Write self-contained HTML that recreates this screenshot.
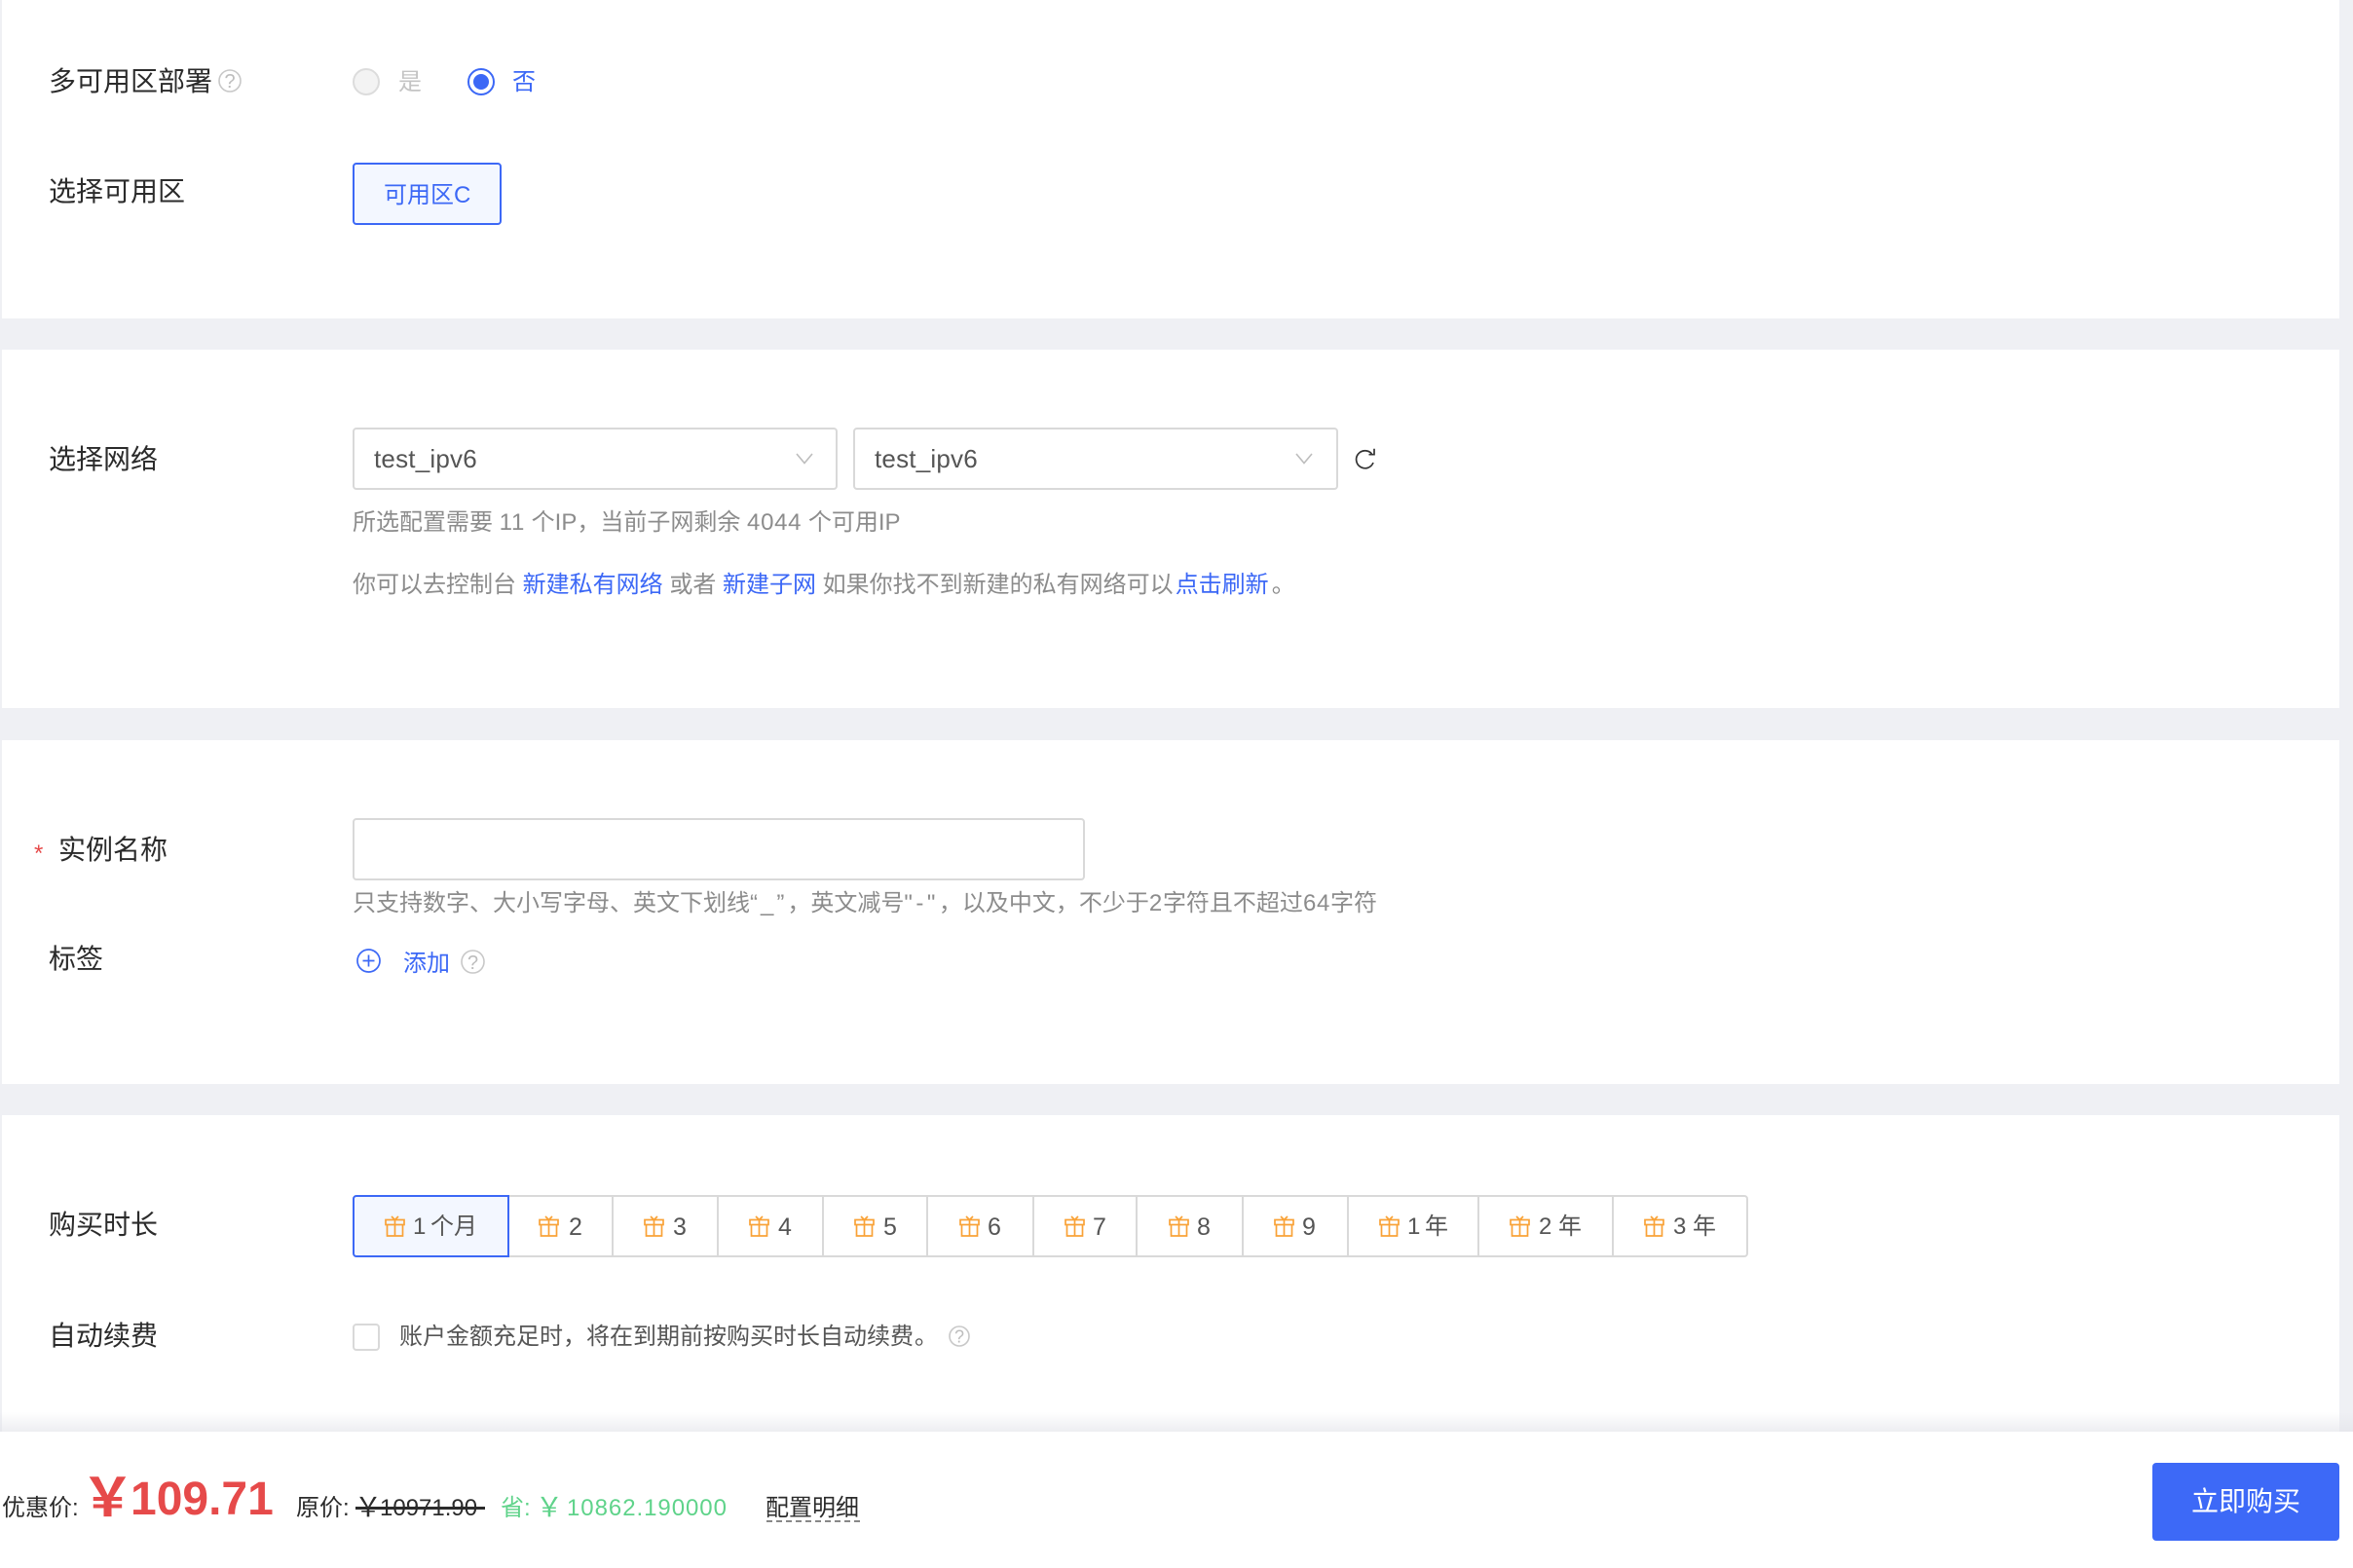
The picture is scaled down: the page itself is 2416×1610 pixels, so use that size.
<!DOCTYPE html>
<html lang="zh-CN"><head><meta charset="utf-8"><title>购买</title>
<style>
html,body{margin:0;padding:0}
body{position:relative;width:2416px;height:1610px;overflow:hidden;background:#eff0f4;font-family:"Liberation Sans","Noto Sans CJK SC",sans-serif;color:#333}
.p{position:absolute;left:2px;width:2400px;background:#fff}
.t{position:absolute;white-space:nowrap;line-height:40px;height:40px;font-size:24px}
.l{font-size:28px;color:#2b2b2b}
.g{color:#8c8c8c}
.b,.b a{color:#3c68f6}
a{color:#3c68f6;text-decoration:none}
.box{position:absolute;box-sizing:border-box;border:2px solid #d9d9d9;border-radius:4px;background:#fff}
.d{position:absolute;top:1227px;height:64px;width:2px;background:#d9d9d9}
.n{color:#555;word-spacing:-3px}
.s{font-size:25px}
.x{letter-spacing:.7px}
svg{position:absolute;overflow:visible}
svg text{font-family:"Liberation Sans",sans-serif}
</style></head><body>
<div class="p" style="top:0;height:327px"></div>
<div class="p" style="top:359px;height:368px"></div>
<div class="p" style="top:760px;height:353px"></div>
<div class="p" style="top:1145px;height:325px"></div>
<div style="position:absolute;left:0;top:1450px;width:2416px;height:20px;background:linear-gradient(rgba(225,226,232,0),rgba(225,226,232,.6))"></div>
<div style="position:absolute;left:0;top:1470px;width:2416px;height:140px;background:#fff"></div>

<!-- section 1 -->
<div class="t l" style="left:50px;top:64px">多可用区部署</div>
<svg style="left:224px;top:71px" width="24" height="24" viewBox="0 0 24 24"><circle cx="12" cy="12" r="11" fill="none" stroke="#c8c8c8" stroke-width="1.6"/><text x="12" y="19" font-size="20" text-anchor="middle" fill="#bdbdbd">?</text></svg>
<div style="position:absolute;box-sizing:border-box;left:362px;top:70px;width:28px;height:28px;border:2px solid #dcdcdc;border-radius:50%;background:#f3f3f3"></div>
<div class="t" style="left:409px;top:65px;color:#c4c4c4">是</div>
<div style="position:absolute;box-sizing:border-box;left:480px;top:70px;width:28px;height:28px;border:2px solid #3c68f6;border-radius:50%;background:#fff"></div>
<div style="position:absolute;left:486px;top:76px;width:16px;height:16px;border-radius:50%;background:#3c68f6"></div>
<div class="t b" style="left:526px;top:65px">否</div>
<div class="t l" style="left:50px;top:177px">选择可用区</div>
<div style="position:absolute;box-sizing:border-box;left:362px;top:167px;width:153px;height:64px;border:2px solid #3c68f6;border-radius:4px;background:#f3f7ff"></div>
<div class="t b" style="left:394px;top:181px">可用区C</div>

<!-- section 2 -->
<div class="t l" style="left:50px;top:452px">选择网络</div>
<div class="box" style="left:362px;top:439px;width:498px;height:64px"></div>
<div class="t" style="left:384px;top:451px;font-size:26px;color:#555;letter-spacing:.2px">test_ipv6</div>
<svg style="left:817px;top:465px" width="18" height="12" viewBox="0 0 18 12"><polyline points="1,1 9,10.5 17,1" fill="none" stroke="#bdbdbd" stroke-width="1.6"/></svg>
<div class="box" style="left:876px;top:439px;width:498px;height:64px"></div>
<div class="t" style="left:898px;top:451px;font-size:26px;color:#555;letter-spacing:.2px">test_ipv6</div>
<svg style="left:1330px;top:465px" width="18" height="12" viewBox="0 0 18 12"><polyline points="1,1 9,10.5 17,1" fill="none" stroke="#bdbdbd" stroke-width="1.6"/></svg>
<svg style="left:1392px;top:461px" width="21" height="21" viewBox="0 0 21 21"><path d="M16.5 5A9 9 0 1 0 18 14" fill="none" stroke="#333" stroke-width="1.7"/><path d="M19 -.3V5.7H13.5" fill="none" stroke="#333" stroke-width="1.7"/></svg>
<div class="t g" style="left:362px;top:517px">所选配置需要 <span class="x">11</span> 个IP，当前子网剩余 <span class="x">4044</span> 个可用IP</div>
<div class="t g" style="left:362px;top:581px">你可以去控制台 <a>新建私有网络</a> 或者 <a>新建子网</a> 如果你找不到新建的私有网络可以<a style="margin-left:2px">点击刷新</a><span style="margin-left:3px">。</span></div>

<!-- section 3 -->
<div class="t" style="left:35px;top:857px;color:#e64a4a">*</div>
<div class="t l" style="left:60px;top:853px">实例名称</div>
<div class="box" style="left:362px;top:840px;width:752px;height:64px"></div>
<div class="t g" style="left:362px;top:908px">只支持数字、大小写字母、英文下划线<span style="letter-spacing:3px">“_”</span>，英文减号<span style="letter-spacing:3.5px">"-"</span>，以及中文，不少于<span class="x">2</span>字符且不超过<span class="x">64</span>字符</div>
<div class="t l" style="left:50px;top:965px">标签</div>
<svg style="left:366px;top:974px" width="25" height="25" viewBox="0 0 25 25"><circle cx="12.5" cy="12.5" r="11.5" fill="none" stroke="#3c68f6" stroke-width="1.7"/><path d="M6.5 12.5H18.5M12.5 6.5V18.5" fill="none" stroke="#3c68f6" stroke-width="1.7"/></svg>
<div class="t b" style="left:414px;top:970px">添加</div>
<svg style="left:473px;top:975px" width="25" height="25" viewBox="0 0 25 25"><circle cx="12.5" cy="12.5" r="11.5" fill="none" stroke="#c8c8c8" stroke-width="1.6"/><text x="12.5" y="20" font-size="20" text-anchor="middle" fill="#bdbdbd">?</text></svg>

<!-- section 4 -->
<div class="t l" style="left:50px;top:1238px">购买时长</div>
<div class="box" style="left:362px;top:1227px;width:1433px;height:64px"></div>
<div class="d" style="left:628px"></div><div class="d" style="left:736px"></div><div class="d" style="left:844px"></div><div class="d" style="left:951px"></div><div class="d" style="left:1060px"></div><div class="d" style="left:1166px"></div><div class="d" style="left:1275px"></div><div class="d" style="left:1383px"></div><div class="d" style="left:1517px"></div><div class="d" style="left:1655px"></div>
<div style="position:absolute;box-sizing:border-box;left:362px;top:1227px;width:161px;height:64px;border:2px solid #3c68f6;border-radius:4px 0 0 4px;background:#f3f7ff"></div>

<svg style="left:395px;top:1248px" width="21" height="22" viewBox="0 0 21 22"><path d="M7 1L10.5 4.5L14 1M1 4.5H20V9.5H1ZM2.5 9.5V21H18.5V9.5M10.5 4.5V21" fill="none" stroke="#f9a237" stroke-width="1.7"/></svg>
<svg style="left:553px;top:1248px" width="21" height="22" viewBox="0 0 21 22"><path d="M7 1L10.5 4.5L14 1M1 4.5H20V9.5H1ZM2.5 9.5V21H18.5V9.5M10.5 4.5V21" fill="none" stroke="#f9a237" stroke-width="1.7"/></svg>
<svg style="left:661px;top:1248px" width="21" height="22" viewBox="0 0 21 22"><path d="M7 1L10.5 4.5L14 1M1 4.5H20V9.5H1ZM2.5 9.5V21H18.5V9.5M10.5 4.5V21" fill="none" stroke="#f9a237" stroke-width="1.7"/></svg>
<svg style="left:769px;top:1248px" width="21" height="22" viewBox="0 0 21 22"><path d="M7 1L10.5 4.5L14 1M1 4.5H20V9.5H1ZM2.5 9.5V21H18.5V9.5M10.5 4.5V21" fill="none" stroke="#f9a237" stroke-width="1.7"/></svg>
<svg style="left:877px;top:1248px" width="21" height="22" viewBox="0 0 21 22"><path d="M7 1L10.5 4.5L14 1M1 4.5H20V9.5H1ZM2.5 9.5V21H18.5V9.5M10.5 4.5V21" fill="none" stroke="#f9a237" stroke-width="1.7"/></svg>
<svg style="left:985px;top:1248px" width="21" height="22" viewBox="0 0 21 22"><path d="M7 1L10.5 4.5L14 1M1 4.5H20V9.5H1ZM2.5 9.5V21H18.5V9.5M10.5 4.5V21" fill="none" stroke="#f9a237" stroke-width="1.7"/></svg>
<svg style="left:1093px;top:1248px" width="21" height="22" viewBox="0 0 21 22"><path d="M7 1L10.5 4.5L14 1M1 4.5H20V9.5H1ZM2.5 9.5V21H18.5V9.5M10.5 4.5V21" fill="none" stroke="#f9a237" stroke-width="1.7"/></svg>
<svg style="left:1200px;top:1248px" width="21" height="22" viewBox="0 0 21 22"><path d="M7 1L10.5 4.5L14 1M1 4.5H20V9.5H1ZM2.5 9.5V21H18.5V9.5M10.5 4.5V21" fill="none" stroke="#f9a237" stroke-width="1.7"/></svg>
<svg style="left:1308px;top:1248px" width="21" height="22" viewBox="0 0 21 22"><path d="M7 1L10.5 4.5L14 1M1 4.5H20V9.5H1ZM2.5 9.5V21H18.5V9.5M10.5 4.5V21" fill="none" stroke="#f9a237" stroke-width="1.7"/></svg>
<svg style="left:1416px;top:1248px" width="21" height="22" viewBox="0 0 21 22"><path d="M7 1L10.5 4.5L14 1M1 4.5H20V9.5H1ZM2.5 9.5V21H18.5V9.5M10.5 4.5V21" fill="none" stroke="#f9a237" stroke-width="1.7"/></svg>
<svg style="left:1550px;top:1248px" width="21" height="22" viewBox="0 0 21 22"><path d="M7 1L10.5 4.5L14 1M1 4.5H20V9.5H1ZM2.5 9.5V21H18.5V9.5M10.5 4.5V21" fill="none" stroke="#f9a237" stroke-width="1.7"/></svg>
<svg style="left:1688px;top:1248px" width="21" height="22" viewBox="0 0 21 22"><path d="M7 1L10.5 4.5L14 1M1 4.5H20V9.5H1ZM2.5 9.5V21H18.5V9.5M10.5 4.5V21" fill="none" stroke="#f9a237" stroke-width="1.7"/></svg>

<div class="t n b" style="left:424px;top:1240px;word-spacing:-2px">1 个月</div>
<div class="t n s" style="left:584px;top:1240px">2</div>
<div class="t n s" style="left:691px;top:1240px">3</div>
<div class="t n s" style="left:799px;top:1240px">4</div>
<div class="t n s" style="left:907px;top:1240px">5</div>
<div class="t n s" style="left:1014px;top:1240px">6</div>
<div class="t n s" style="left:1122px;top:1240px">7</div>
<div class="t n s" style="left:1229px;top:1240px">8</div>
<div class="t n s" style="left:1337px;top:1240px">9</div>
<div class="t n" style="left:1445px;top:1240px;word-spacing:-2px">1 年</div>
<div class="t n" style="left:1580px;top:1240px;word-spacing:0">2 年</div>
<div class="t n" style="left:1718px;top:1240px;word-spacing:0">3 年</div>

<div class="t l" style="left:50px;top:1352px">自动续费</div>
<div class="box" style="left:362px;top:1359px;width:28px;height:28px"></div>
<div class="t" style="left:410px;top:1353px;color:#555">账户金额充足时，将在到期前按购买时长自动续费<span style="margin-left:1px">。</span></div>
<svg style="left:974px;top:1361px" width="22" height="22" viewBox="0 0 22 22"><circle cx="11" cy="11" r="10" fill="none" stroke="#c8c8c8" stroke-width="1.6"/><text x="11" y="17.5" font-size="18" text-anchor="middle" fill="#bdbdbd">?</text></svg>

<!-- footer -->
<div class="t" style="left:2px;top:1529px;color:#2b2b2b">优惠价:</div>
<div class="t" style="left:83px;top:1508px;height:60px;line-height:60px;font-size:55px;font-weight:bold;color:#e64a4a">￥</div>
<div class="t" style="left:134px;top:1510px;height:60px;line-height:60px;font-size:48px;font-weight:bold;color:#e64a4a">109.71</div>
<div class="t" style="left:304px;top:1529px;color:#2b2b2b">原价:</div>
<div class="t" style="left:364px;top:1528px;color:#2b2b2b;font-size:28px">￥</div>
<div class="t" style="left:390px;top:1529px;color:#2b2b2b">10971.90</div>
<div style="position:absolute;left:365px;top:1547px;width:133px;height:3px;background:#2b2b2b"></div>
<div class="t" style="left:514px;top:1529px;color:#5fd38a">省:</div>
<div class="t" style="left:550px;top:1528px;color:#5fd38a;font-size:28px">￥</div>
<div class="t" style="left:582px;top:1529px;color:#5fd38a;letter-spacing:.95px">10862.190000</div>
<div class="t" style="left:786px;top:1529px;color:#2b2b2b">配置明细</div>
<div style="position:absolute;left:787px;top:1561px;width:96px;height:0;border-top:2px dashed #888"></div>
<div style="position:absolute;left:2210px;top:1502px;width:192px;height:80px;border-radius:4px;background:#3d69f7"></div>
<div class="t" style="left:2250px;top:1522px;font-size:28px;color:#fff">立即购买</div>
</body></html>
